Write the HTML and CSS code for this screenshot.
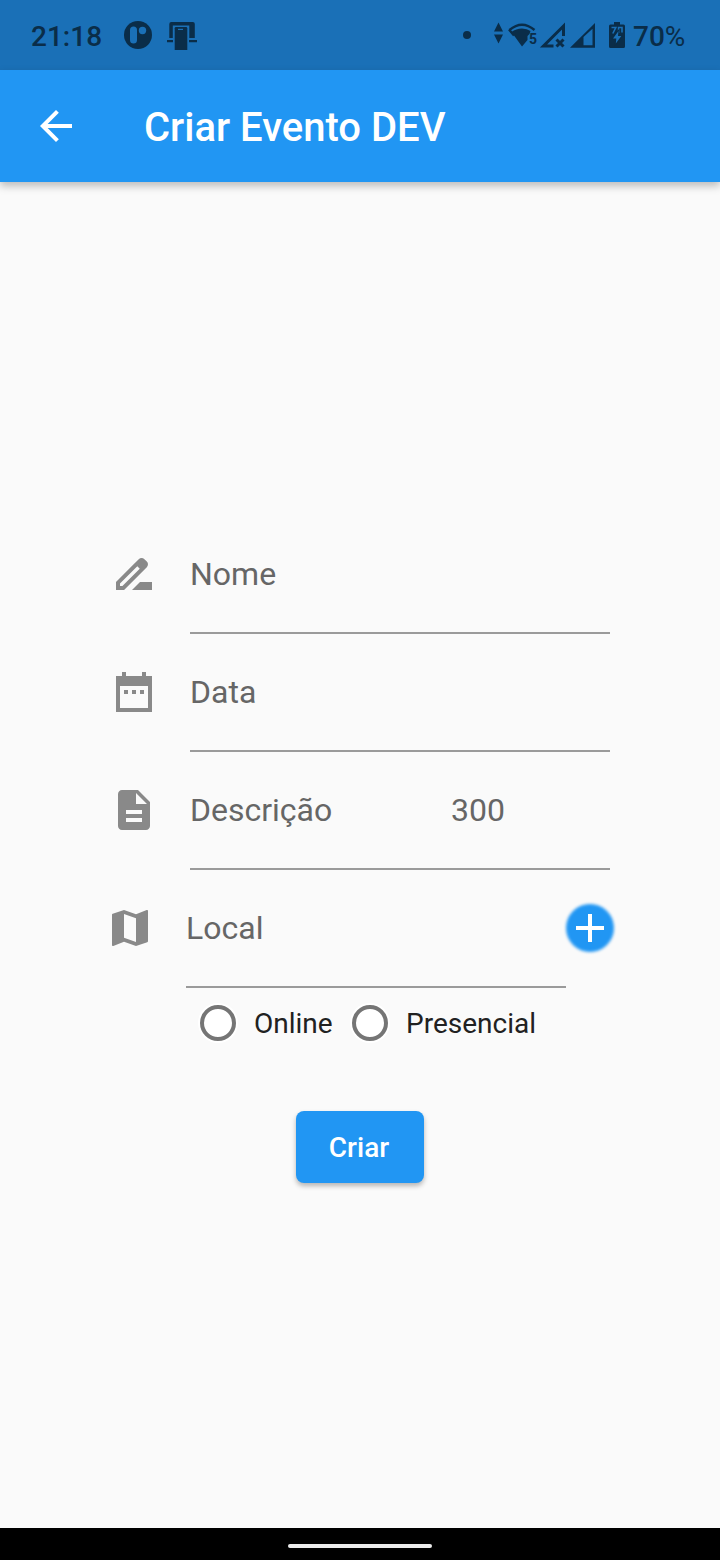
FILE: index.html
```html
<!DOCTYPE html>
<html lang="pt-BR">
<head>
<meta charset="utf-8">
<title>Criar Evento DEV</title>
<link rel="stylesheet" href="styles.css">
</head>
<body>
<div class="screen">
  <div class="status">
    <span class="clock">21:18</span>
    <svg class="notifications" width="76" height="36" viewBox="122 18 76 36">
      <circle cx="138" cy="35" r="14"/>
      <rect class="cut" x="130" y="26.500" width="7" height="17" rx="3.500"/>
      <circle class="cut" cx="142.500" cy="30.500" r="3.700"/>
      <path d="M169.300 38V24q0-2 2-2h21.500q2 0 2 2v14h-5.500V25.500h-16.500V38zM167 40h6v2.300h-6zM189 40h8v2.300h-8z"/>
      <path d="M176 27h10q1.300 0 1.300 1.300V50h-12.600V28.300q0-1.300 1.300-1.300z"/>
      <path class="cut" d="M178 28.800h5v1.200h-5z"/>
    </svg>
    <svg class="signals" width="168" height="36" viewBox="460 18 168 36">
      <circle cx="467" cy="35" r="4"/>
      <path d="M498.500 22.500l4.500 9h-9zM494 34.500h9l-4.500 9z"/>
      <path class="line" d="M509.500 30q12.500-10.500 25 0M509 29.500l5 6"/>
      <path d="M511.500 32q4.500-3.500 10.500-3.500 5 0 8.500 2.500l-1 3-2 2v4l-5.500 6.500z"/>
      <text x="529" y="43.500">5</text>
      <path class="line thick" d="M553.500 45.900H543.500L563.500 26V36"/>
      <path class="line thick" d="M556.500 39.500l7 7m0-7l-7 7"/>
      <path fill-rule="evenodd" d="M570 47.800L595 23v24.800zM583.500 37v8.300h9V28.800z"/>
      <path d="M609 26q0-1.500 1.500-1.500h3.500V22h6v2.500h3.500q1.500 0 1.500 1.500v20.500q0 1.500-1.500 1.500h-13q-1.500 0-1.500-1.500z"/>
      <path class="digits" d="M611.500 27.500h4.300l-3 6M618.600 33v-5.500h3.400v5"/>
      <path class="cut bolt" d="M618.500 31l-5.500 7.500h3.300l-.5 5 5.500-7.500h-3.300z"/>
    </svg>
    <span class="battery">70<span class="percent">%</span></span>
  </div>
  <header class="appbar">
    <svg width="48" height="48" viewBox="0 0 24 24"><path d="M20 11H7.830l5.590-5.590L12 4l-8 8 8 8 1.410-1.410L7.830 13H20v-2z"/></svg>
    <h1>Criar Evento DEV</h1>
  </header>
  <main class="form">
    <div class="row">
      <svg class="icon" viewBox="0 0 24 24"><path d="M18.410 5.800L17.200 4.590c-.78-.78-2.050-.78-2.830 0l-2.680 2.680L3 15.960V20h4.040l8.740-8.740 2.630-2.630c.79-.78.79-2.050 0-2.830zM6.210 18H5v-1.210l8.660-8.660 1.210 1.210L6.210 18zM11 20l4-4h6v4H11z"/></svg>
      <div class="field"><span>Nome</span></div>
    </div>
    <div class="row">
      <svg class="icon" viewBox="0 0 24 24"><path fill-rule="evenodd" d="M3 4h3V2h2v2h8V2h2v2h3v18H3zM5 9v11h14V9zM7 11h2v2H7zM11 11h2v2h-2zM15 11h2v2h-2z"/></svg>
      <div class="field"><span>Data</span></div>
    </div>
    <div class="row">
      <svg class="icon" viewBox="0 0 24 24"><path d="M14 2H6c-1.100 0-1.990.9-1.990 2L4 20c0 1.100.89 2 1.990 2H18c1.100 0 2-.9 2-2V8l-6-6zm2 16H8v-2h8v2zm0-4H8v-2h8v2zm-3-5V3.500L18.500 9H13z"/></svg>
      <div class="field"><span>Descrição</span><span class="limit">300</span></div>
    </div>
    <div class="row place">
      <svg class="icon" viewBox="0 0 24 24"><path d="M20.500 3l-.16.03L15 5.100 9 3 3.360 4.900c-.21.07-.36.25-.36.48V20.500c0 .28.22.5.5.5l.16-.03L9 18.900l6 2.100 5.640-1.900c.21-.07.36-.25.36-.48V3.500c0-.28-.22-.5-.5-.5zM15 19l-6-2.110V5l6 2.110V19z"/></svg>
      <div class="field"><span>Local</span></div>
      <svg class="add" width="48" height="48" viewBox="0 0 24 24"><circle cx="12" cy="12" r="12"/><path d="M19 13h-6v6h-2v-6H5v-2h6V5h2v6h6v2z"/></svg>
    </div>
    <div class="options">
      <label><i class="radio"></i><span>Online</span></label>
      <label><i class="radio"></i><span>Presencial</span></label>
    </div>
    <button class="submit">Criar</button>
  </main>
  <div class="navbar"><div class="handle"></div></div>
</div>
</body>
</html>
```
FILE: styles.css
```css
* { box-sizing: border-box; }
body { margin: 0; font-family: Roboto, "Noto Sans", sans-serif; }
.screen {
  width: 720px;
  height: 1560px;
  display: flex;
  flex-direction: column;
  background: #fafafa;
  overflow: hidden;
}
.status {
  height: 70px;
  flex: none;
  display: flex;
  align-items: center;
  padding: 2px 0 0 31px;
  background: #1a70b7;
  color: #0a2d49;
  font-size: 28px;
  font-weight: 500;
}
.status svg { fill: #0a2d49; flex: none; }
.status .cut { fill: #1a70b7; }
.status .line { fill: none; stroke: #0a2d49; stroke-width: 2.4; }
.status .thick { stroke-width: 3; }
.status .digits { fill: none; stroke: #1a70b7; stroke-width: 1.6; }
.status .bolt { stroke: #0a2d49; stroke-width: 1.6; paint-order: stroke; }
.status text { font: 700 14px Roboto, sans-serif; }
.clock { width: 91px; }
.signals { margin-left: 262px; }
.battery { margin-left: 5px; }
.percent { font-weight: 400; }
.appbar {
  height: 112px;
  flex: none;
  display: flex;
  align-items: center;
  padding-left: 32px;
  background: #2196f3;
  box-shadow: 0 4px 8px rgba(0, 0, 0, 0.25);
}
.appbar svg { fill: #fff; }
.appbar h1 {
  margin: 2px 0 0 64px;
  color: #fff;
  font-size: 40px;
  font-weight: 500;
}
.form {
  flex: 1;
  display: flex;
  flex-direction: column;
  padding: 334px 110px 0;
}
.row { display: flex; height: 118px; }
.icon { width: 48px; height: 48px; margin: 34px 32px 0 0; fill: #898989; flex: none; }
.field {
  flex: 1;
  display: flex;
  align-items: center;
  border-bottom: 2px solid #9a9a9a;
  color: #666;
  font-size: 32px;
}
.limit { margin-left: auto; padding-right: 105px; }
.place { margin: 0 -4px; }
.add { margin-top: 34px; overflow: visible; fill: #fff; }
.add circle { fill: #2196f3; filter: blur(0.8px); }
.options { display: flex; gap: 19.4px; padding: 17px 0 0 90px; }
.options label { display: flex; align-items: center; gap: 18px; color: #212121; font-size: 28px; height: 36px; }
.radio {
  width: 36px;
  height: 36px;
  border: 4px solid #757575;
  border-radius: 50%;
  background: #fff;
  box-shadow: 0 0 0 2px #fff;
}
.submit {
  align-self: center;
  width: 128px;
  height: 72px;
  margin-top: 70px;
  padding: 0 2px 0 0;
  border: 0;
  border-radius: 8px;
  background: #2196f3;
  box-shadow: 0 3px 5px rgba(0, 0, 0, 0.28);
  color: #fff;
  font: 500 28px Roboto, sans-serif;
}
.navbar { height: 32px; flex: none; display: flex; justify-content: center; background: #000; }
.handle { width: 144px; height: 4px; margin-top: 16px; border-radius: 2px; background: #ececec; }
```
